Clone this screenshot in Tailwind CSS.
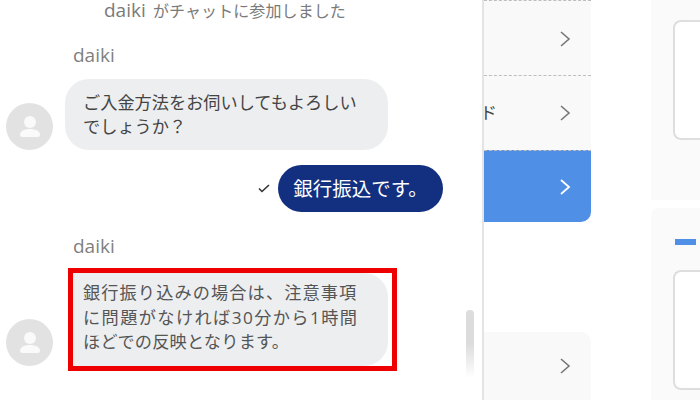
<!DOCTYPE html>
<html lang="ja">
<head>
    <meta charset="UTF-8">
    <title>Chat</title>
    <script src="https://cdn.jsdelivr.net/npm/@tailwindcss/browser@4"></script>
</head>
<body class="bg-white overflow-hidden font-['Open_Sans','Noto_Sans_CJK_JP',sans-serif]">
    <div class="flex w-[700px] h-[400px] overflow-hidden">
        <!-- Chat panel -->
        <div class="relative w-[484px] shrink-0 h-full border-r-2 border-[#e4e4e4] pl-[6px]">
            <p class="pl-[98px] text-[16px] leading-[21px] text-[#7a7a7a]"><span class="text-[19px] mr-[3px]">daiki</span> <span class="tracking-[0.100px]">がチャットに参加しました</span></p>

            <p class="mt-[23px] pl-[67px] text-[19px] leading-[21px] text-[#7f7f7f]">daiki</p>
            <div class="mt-[13px] flex items-end gap-[12px]">
                <div class="w-[47px] h-[47px] rounded-full bg-[#e2e2e2] flex items-center justify-center shrink-0">
                    <svg width="20" height="21" viewBox="0 0 20 21" fill="#fafafa"><circle cx="10" cy="6" r="6"/><path d="M0 19c0-4 4.500-6 10-6s10 2 10 6c0 1-1 2-2 2H2c-1 0-2-1-2-2z"/></svg>
                </div>
                <div class="w-[323px] h-[71px] rounded-[24px] bg-[#eceef0] pl-[18px] pt-[12px] text-[17.200px] leading-[24px] text-[#444]">ご入金方法をお伺いしてもよろしい<br>でしょうか？</div>
            </div>

            <div class="mt-[15px] flex items-center justify-end gap-[8px] pr-[39px]">
                <svg width="12" height="9" viewBox="0 0 12 9" fill="none" stroke="#333" stroke-width="1.600"><path d="M1 4.500l3 3 7-6.500"/></svg>
                <div class="w-[165px] h-[47px] rounded-[24px] bg-[#12307f] flex items-center justify-center text-[19.500px] text-white">銀行振込です。</div>
            </div>

            <p class="mt-[24px] pl-[67px] text-[19px] leading-[21px] text-[#7f7f7f]">daiki</p>
            <div class="mt-[11px] flex items-end gap-[15px]">
                <div class="w-[47px] h-[47px] mb-[5px] rounded-full bg-[#e2e2e2] flex items-center justify-center shrink-0">
                    <svg width="20" height="21" viewBox="0 0 20 21" fill="#fafafa"><circle cx="10" cy="6" r="6"/><path d="M0 19c0-4 4.500-6 10-6s10 2 10 6c0 1-1 2-2 2H2c-1 0-2-1-2-2z"/></svg>
                </div>
                <div class="w-[329px] h-[103px] border-[5px] border-[#ee0000] bg-white">
                    <div class="w-[315px] h-[93px] rounded-r-[24px] bg-[#eceef0] pl-[10px] pt-[8px] text-[17.200px] leading-[24.500px] tracking-[1.100px] text-[#555] whitespace-nowrap">銀行振り込みの場合は、注意事項<br><span class="tracking-[1.400px]">に問題がなければ30分から1時間</span><br><span class="tracking-[0.200px]">ほどでの反映となります。</span></div>
                </div>
            </div>

            <!-- scrollbar thumb -->
            <div class="absolute left-[466px] top-[310px] w-[8px] h-[68px] rounded-[4px] bg-gradient-to-b from-[#dcdcdc] via-[#dcdcdc] to-white"></div>
        </div>

        <!-- Payment method list -->
        <div class="w-[107px] shrink-0 h-full flex flex-col">
            <div class="h-[75px] pt-px bg-[#f9f9f9] border-t border-dashed border-[#bdbdbd] flex items-center justify-end pr-[20px]">
                <svg width="12" height="18" viewBox="0 0 12 18" fill="none" stroke="#777" stroke-width="1.600"><path d="M2 2l8 7-8 7"/></svg>
            </div>
            <div class="h-[75px] bg-[#f9f9f9] border-t border-dashed border-[#bdbdbd] flex items-center justify-between pr-[20px] overflow-hidden">
                <span class="ml-[-4px] text-[17px] text-[#444]">ド</span>
                <svg width="12" height="18" viewBox="0 0 12 18" fill="none" stroke="#777" stroke-width="1.600"><path d="M2 2l8 7-8 7"/></svg>
            </div>
            <div class="h-[72px] bg-[#4f8fe6] border-t border-dashed border-[#bdbdbd] rounded-br-[10px] flex items-center justify-end pr-[20px]">
                <svg width="12" height="18" viewBox="0 0 12 18" fill="none" stroke="#fff" stroke-width="1.800"><path d="M2 2l8 7-8 7"/></svg>
            </div>
            <div class="h-[110px]"></div>
            <div class="h-[68px] bg-[#f9f9f9] rounded-tr-[10px] flex items-start justify-end pr-[20px] pt-[25px]">
                <svg width="12" height="18" viewBox="0 0 12 18" fill="none" stroke="#777" stroke-width="1.600"><path d="M2 2l8 7-8 7"/></svg>
            </div>
        </div>

        <!-- Right column -->
        <div class="ml-[60px] flex-1 h-full flex flex-col gap-[8px]">
            <div class="h-[200px] bg-[#fafafa] pl-[22px] pt-[20px]">
                <div class="h-[120px] bg-white border-2 border-r-0 border-[#dedede] rounded-l-[8px]"></div>
            </div>
            <div class="flex-1 bg-[#fafafa] rounded-tl-[8px] pl-[22px] pt-[31px]">
                <div class="ml-[2px] w-[21px] h-[6px] bg-[#4f8fe6]"></div>
                <div class="mt-[25px] h-[120px] bg-white border-2 border-r-0 border-[#dedede] rounded-l-[8px]"></div>
            </div>
        </div>
    </div>
</body>
</html>
